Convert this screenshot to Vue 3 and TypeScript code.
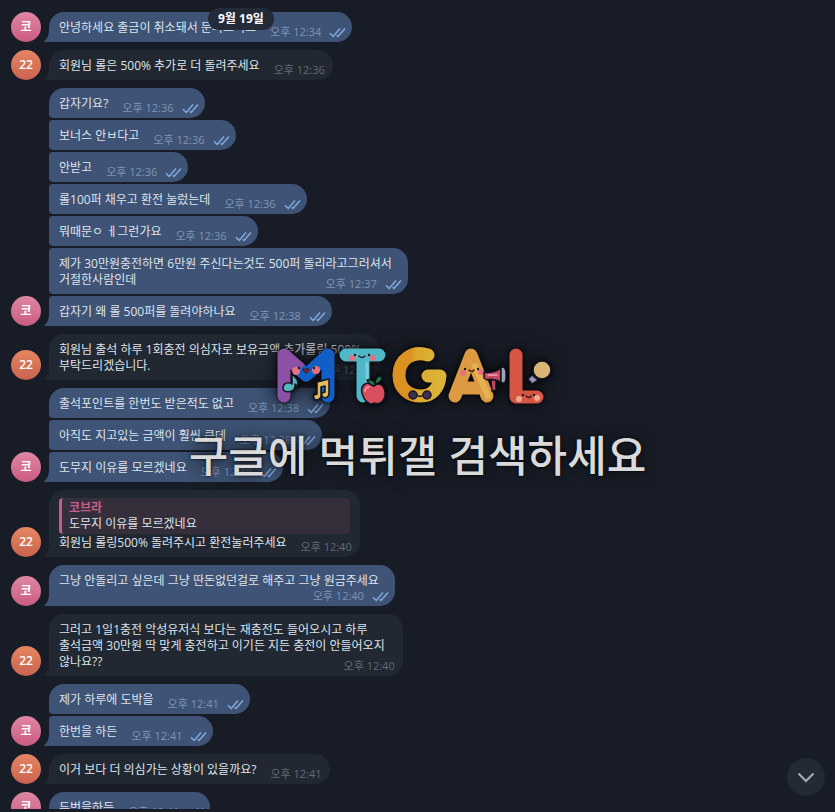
<script setup lang="ts">
interface Message {
  text: string
  time: string
  stacked?: boolean
  ownLine?: boolean
  quote?: { author: string; text: string }
}

interface Group {
  mine: boolean
  initials: string
  messages: Message[]
}

const groups: Group[] = [
  { mine: true, initials: '코', messages: [{ text: '안녕하세요 출금이 취소돼서 문의드려요', time: '오후 12:34' }] },
  { mine: false, initials: '22', messages: [{ text: '회원님 롤은 500% 추가로 더 돌려주세요', time: '오후 12:36' }] },
  {
    mine: true,
    initials: '코',
    messages: [
      { text: '갑자기요?', time: '오후 12:36' },
      { text: '보너스 안ㅂ다고', time: '오후 12:36' },
      { text: '안받고', time: '오후 12:36' },
      { text: '롤100퍼 채우고 환전 눌렀는데', time: '오후 12:36' },
      { text: '뭐때문ㅇ ㅔ그런가요', time: '오후 12:36' },
      { text: '제가 30만원충전하면 6만원 주신다는것도 500퍼 돌리라고그러셔서\n거절한사람인데', time: '오후 12:37', stacked: true },
      { text: '갑자기 왜 롤 500퍼를 돌려야하나요', time: '오후 12:38' },
    ],
  },
  {
    mine: false,
    initials: '22',
    messages: [{ text: '회원님 출석 하루 1회충전 의심자로 보유금액 추가롤링 500%\n부탁드리겠습니다.', time: '오후 12:38', stacked: true }],
  },
  {
    mine: true,
    initials: '코',
    messages: [
      { text: '출석포인트를 한번도 받은적도 없고', time: '오후 12:38' },
      { text: '아직도 지고있는 금액이 훨씬 큰데', time: '오후 12:38' },
      { text: '도무지 이유를 모르겠네요', time: '오후 12:38' },
    ],
  },
  {
    mine: false,
    initials: '22',
    messages: [
      {
        text: '회원님 롤링500% 돌려주시고 환전눌러주세요',
        time: '오후 12:40',
        quote: { author: '코브라', text: '도무지 이유를 모르겠네요' },
      },
    ],
  },
  {
    mine: true,
    initials: '코',
    messages: [{ text: '그냥 안돌리고 싶은데 그냥 딴돈없던걸로 해주고 그냥 원금주세요', time: '오후 12:40', ownLine: true }],
  },
  {
    mine: false,
    initials: '22',
    messages: [
      {
        text: '그러고 1일1충전 악성유저식 보다는 재충전도 들어오시고 하루\n출석금액 30만원 딱 맞게 충전하고 이기든 지든 충전이 안들어오지\n않나요??',
        time: '오후 12:40',
        stacked: true,
      },
    ],
  },
  {
    mine: true,
    initials: '코',
    messages: [
      { text: '제가 하루에 도박을', time: '오후 12:41' },
      { text: '한번을 하든', time: '오후 12:41' },
    ],
  },
  { mine: false, initials: '22', messages: [{ text: '이거 보다 더 의심가는 상황이 있을까요?', time: '오후 12:41' }] },
  { mine: true, initials: '코', messages: [{ text: '두번을하든', time: '오후 12:41' }] },
]
</script>

<template>
  <main class="chat">
    <div class="date">9월 19일</div>

    <div class="history">
      <section v-for="(group, g) in groups" :key="g" class="group" :class="group.mine ? 'mine' : 'theirs'">
        <div class="avatar">{{ group.initials }}</div>
        <div class="bubbles">
          <article
            v-for="(message, m) in group.messages"
            :key="m"
            class="bubble"
            :class="{ stacked: message.stacked, 'own-line': message.ownLine }"
          >
            <blockquote v-if="message.quote" class="quote">
              <strong>{{ message.quote.author }}</strong>
              <span>{{ message.quote.text }}</span>
            </blockquote>
            <div class="line">
              <p class="text">{{ message.text }}</p>
              <div class="meta">
                <time>{{ message.time }}</time>
                <svg v-if="group.mine" class="ticks" viewBox="0 0 17 11" aria-hidden="true">
                  <path d="M1 6.2 4.2 9.5 11 1.5M7.6 8.2 9 9.5 16 1.5" />
                </svg>
              </div>
            </div>
            <svg v-if="m === group.messages.length - 1" class="tail" viewBox="0 0 6 12" aria-hidden="true">
              <path d="M6 0V12H1Q-.5 11.500 1 10.500Q5 7 5 0Z" />
            </svg>
          </article>
        </div>
      </section>
    </div>

    <button class="jump" type="button" aria-label="맨 아래로">
      <svg viewBox="0 0 18 11"><path d="M1.500 1.500 9 9 16.500 1.500" /></svg>
    </button>

    <div class="watermark">
      <svg class="logo" viewBox="0 0 290 64" role="img" aria-label="MTGAL">
        <defs>
          <linearGradient id="gold" x1="0" x2="1">
            <stop offset=".3" stop-color="#dc9123" />
            <stop offset=".42" stop-color="#dda72d" />
            <stop offset="1" stop-color="#dcb43a" />
          </linearGradient>
        </defs>
        <g fill="none" stroke-linecap="round" stroke-linejoin="round">
          <path stroke="#125ec7" stroke-width="13" d="M33 31 55 11V52" />
          <path stroke="#8d50a7" stroke-width="13" d="M11 52V11L27 25" />
          <path stroke="#125ec7" stroke-width="13" stroke-linecap="butt" d="M27 26 33 31 38 27" />
          <path stroke="#4eb8c9" stroke-width="13" d="M73 11H106M90 12V52" />
          <path stroke="#79ccda" stroke-width="3" d="M94 19V38" />
          <path stroke="url(#gold)" stroke-width="13" d="M155 11C139 6 126 16 126 31C126 45 136 52 148 52C159 52 166 44 167 32H155" />
          <path stroke="#dc9a43" stroke-width="13" d="M182 52 198 11 214 52M187 44H208" />
          <path stroke="#e4b253" stroke-width="6" d="M202 22 215 52" />
          <path stroke="#d75643" stroke-width="13" d="M243 11V53H264" />
        </g>
        <g fill="#e66f80">
          <circle cx="23" cy="27" r="4" /><circle cx="43" cy="26" r="4" />
          <circle cx="79" cy="14" r="3" /><circle cx="100" cy="14" r="3" />
          <circle cx="190" cy="29" r="3" /><circle cx="208" cy="28" r="3" />
        </g>
        <g fill="#efaa96"><circle cx="246" cy="55" r="3" /><circle cx="264" cy="54" r="3" /></g>
        <g fill="#18171e">
          <circle cx="26" cy="24" r="1.200" /><circle cx="41" cy="24" r="1.200" />
          <circle cx="82" cy="11" r="1.200" /><circle cx="96" cy="11" r="1.200" />
          <circle cx="192" cy="25" r="1.200" /><circle cx="205" cy="25" r="1.200" />
          <circle cx="250" cy="51" r="1.200" /><circle cx="261" cy="51" r="1.200" />
        </g>
        <path fill="#7d2634" stroke="#3c1722" d="M30 25H36Q35 29 33 29Q31 29 30 25Z" />
        <path fill="none" stroke="#3c1722" stroke-width="1.500" stroke-linecap="round" d="M86 12Q89 15 92 12M196 26Q199 29 201 26M253 52Q256 55 258 52" />
        <g stroke="#111520" stroke-width="1.500" stroke-linejoin="round">
          <path fill="#55b7bd" d="M19 29C21 34 27 34 24 43L22 40V42C22 49 9 50 10 43C11 38 17 38 19 40Z" />
          <path fill="#e4b85b" d="M44 38 56 35V50C55 56 47 54 49 49L52 48V42L48 43V53C45 58 39 56 41 51L44 50Z" />
          <path fill="#d94f60" d="M101 42C94 36 87 41 89 49C91 57 97 62 101 59C107 62 113 56 112 48C111 40 105 38 101 42Z" />
          <path fill="#227848" d="M101 42Q95 40 94 36Q101 35 102 40Q102 33 108 31Q111 37 103 40Z" />
          <path fill="#c54662" d="M211 28Q220 30 228 24V38Q220 34 214 36L211 34ZM218 36H223V46L219 47Z" />
          <path fill="#9fa5b5" d="M228 24Q232 21 233 28V35Q232 41 228 38Z" />
          <circle cx="269" cy="26" r="9" fill="#d9b576" />
          <path fill="#9990bd" d="M259 31 265 36 259 40 255 35Z" />
        </g>
        <path fill="none" stroke="#faa6b5" stroke-width="1.500" stroke-linecap="round" d="M92 47Q93 43 96 43M215 31H224" />
        <g fill="#3b304f" stroke="#181727" stroke-width="1.500">
          <circle cx="140" cy="51" r="4" /><circle cx="154" cy="51" r="4" />
          <path fill="none" d="M144 51Q147 54 150 51" />
        </g>
      </svg>
      <p>구글에 먹튀갤 검색하세요</p>
    </div>
  </main>
</template>

<style>
body {
  background: #181c26;
}
</style>

<style scoped>
.chat {
  position: relative;
  height: calc(100vh - 3px);
  overflow: hidden;
  background: #181c26;
  color: #dfe4ec;
  font: 12px/16px "Open Sans", "Noto Sans CJK KR", sans-serif;
}

p,
blockquote {
  margin: 0;
}

.history {
  display: flex;
  flex-direction: column;
  gap: 8px;
  padding: 12px 11px;
}

.group {
  display: flex;
  align-items: flex-end;
  gap: 8px;
}

.avatar {
  display: grid;
  flex: none;
  place-items: center;
  width: 30px;
  height: 30px;
  border-radius: 50%;
  color: #fff;
  font-weight: 600;
}

.mine .avatar {
  background: linear-gradient(#df87a5, #c95c7f);
}

.theirs .avatar {
  background: linear-gradient(#e58661, #c96350);
}

.bubbles {
  display: flex;
  flex-direction: column;
  align-items: flex-start;
  gap: 2px;
}

.bubble {
  position: relative;
  padding: 8px 10px 6px;
  border-radius: 4px 15px 15px 4px;
}

.bubble:first-child {
  border-top-left-radius: 15px;
}

.bubble:last-child {
  border-bottom-left-radius: 0;
}

.mine .bubble {
  padding-right: 6px;
  background: #3e5375;
}

.theirs .bubble {
  padding-right: 8px;
  background: #212832;
}

.tail {
  position: absolute;
  bottom: 0;
  left: -5px;
  width: 6px;
  height: 12px;
  fill: #3e5375;
}

.theirs .tail {
  fill: #212832;
}

.line {
  display: flex;
  align-items: flex-end;
  gap: 14px;
}

.text {
  white-space: pre;
}

.meta {
  display: flex;
  align-items: center;
  gap: 8px;
  height: 14px;
  margin-bottom: -3px;
  color: #7f93b8;
  font-size: 11px;
  line-height: 14px;
  white-space: nowrap;
}

.theirs .meta {
  color: #626a76;
}

.ticks {
  width: 17px;
  height: 11px;
  fill: none;
  stroke: #83abe0;
  stroke-width: 1.500;
}

.stacked .line,
.own-line .line {
  flex-direction: column;
  gap: 0;
}

.stacked .text,
.own-line .text {
  align-self: flex-start;
  padding-right: 10px;
}

.stacked .meta {
  margin-top: -11px;
}

.quote {
  display: flex;
  flex-direction: column;
  margin: 0 2px 1px 0;
  padding: 2px 7px;
  border-left: 3px solid #bd6089;
  border-radius: 4px;
  background: #352f3c;
}

.quote strong {
  color: #c75f8d;
}

.date {
  position: absolute;
  z-index: 1;
  top: 8px;
  left: 208px;
  padding: 3px 10px;
  border-radius: 11px;
  background: #222b37;
  color: #fff;
  font-weight: 700;
}

.jump {
  position: absolute;
  right: 10px;
  bottom: 13px;
  display: grid;
  place-items: center;
  width: 38px;
  height: 38px;
  padding: 0;
  border: 0;
  border-radius: 50%;
  background: #222a35;
}

.jump svg {
  width: 18px;
  height: 11px;
  fill: none;
  stroke: #a5adb9;
  stroke-width: 2;
}

.watermark {
  position: absolute;
  top: 344px;
  right: 0;
  left: 0;
  display: flex;
  flex-direction: column;
  align-items: center;
  pointer-events: none;
}

.logo {
  width: 290px;
  height: 64px;
  filter: drop-shadow(0 0 2px #000) drop-shadow(0 0 10px #0a0c10);
}

.watermark p {
  color: #dadada;
  font-size: 43px;
  font-weight: 500;
  line-height: 96px;
  text-shadow: 0 0 3px #000, 0 0 16px #0a0c10;
  white-space: nowrap;
}
</style>
